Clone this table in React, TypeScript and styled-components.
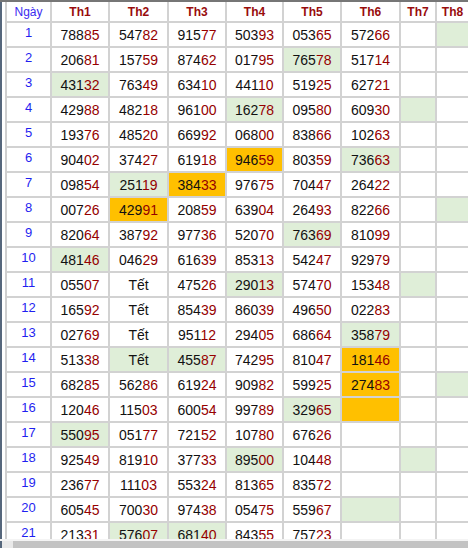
import React from "react";
import styled, { createGlobalStyle } from "styled-components";

const Global = createGlobalStyle`
  html, body { margin: 0; padding: 0; background: #fff; overflow: hidden; }
  body { font-family: "Liberation Sans", Arial, sans-serif; }
`;

type Bg = "g" | "o" | undefined;
type Cell = { v: string; bg?: Bg };

const raw: string[][] = [
  ["78885", "54782", "91577", "50393", "05365", "57266", "", "|g"],
  ["20681", "15759", "87462", "01795", "76578|g", "51714", "", ""],
  ["43132|g", "76349", "63410", "44110", "51925", "62721", "", ""],
  ["42988", "48218", "96100", "16278|g", "09580", "60930", "|g", ""],
  ["19376", "48520", "66992", "06800", "83866", "10263", "", ""],
  ["90402", "37427", "61918", "94659|o", "80359", "73663|g", "", ""],
  ["09854", "25119|g", "38433|o", "97675", "70447", "26422", "", ""],
  ["00726", "42991|o", "20859", "63904", "26493", "82266", "", "|g"],
  ["82064", "38792", "97736", "52070", "76369|g", "81099", "", ""],
  ["48146|g", "04629", "61639", "85313", "54247", "92979", "", ""],
  ["05507", "Tết", "47526", "29013|g", "57470", "15348", "|g", ""],
  ["16592", "Tết", "85439", "86039", "49650", "02283", "", ""],
  ["02769", "Tết", "95112", "29405", "68664", "35879|g", "", ""],
  ["51338", "Tết|g", "45587|g", "74295", "81047", "18146|o", "", ""],
  ["68285", "56286", "61924", "90982", "59925", "27483|o", "", "|g"],
  ["12046", "11503", "60054", "99789", "32965|g", "|o", "", ""],
  ["55095|g", "05177", "72152", "10780", "67626", "", "", ""],
  ["92549", "81910", "37733", "89500|g", "10448", "", "|g", ""],
  ["23677", "11103", "55324", "81365", "83572", "", "", ""],
  ["60545", "70030", "97438", "05475", "55967", "|g", "", ""],
  ["21331", "57607|g", "68140|g", "84355", "75723", "", "", ""],
];

const rows: Cell[][] = raw.map((r) =>
  r.map((s) => {
    const [v, bg] = s.split("|");
    return { v, bg: (bg as Bg) || undefined };
  })
);

const headers = ["Th1", "Th2", "Th3", "Th4", "Th5", "Th6", "Th7", "Th8"];

const Page = styled.div`
  display: flex;
  height: 548px;
  border-top: 2px solid #767676;
  box-sizing: border-box;
  overflow: hidden;
`;

const Frame = styled.div`
  width: 2px;
  flex: none;
  background: #56677c;
`;

const Gutter = styled.div`
  width: 3px;
  flex: none;
  background: #ffffff;
`;

const Grid = styled.div`
  display: grid;
  grid-template-columns: 45px 58px 59px 58px 57px 58px 59px 36px 33px;
  grid-auto-rows: 25px;
  grid-template-rows: 21px;
  border-left: 2px solid #cfcfcf;
  align-content: start;
`;

const BaseCell = styled.div`
  box-sizing: border-box;
  border-right: 2px solid #d2d2d2;
  border-bottom: 2px solid #d2d2d2;
  display: flex;
  align-items: center;
  justify-content: center;
  white-space: nowrap;
`;

const HeadCell = styled(BaseCell)`
  font-size: 12px;
  font-weight: bold;
  color: #980c0c;
  padding-top: 1px;
`;

const DayHead = styled(BaseCell)`
  font-size: 12px;
  color: #3b2cf0;
  padding-top: 1px;
`;

const DayCell = styled(BaseCell)`
  font-size: 13px;
  color: #1f1ff0;
  padding-bottom: 5px;
`;

const DataCell = styled(BaseCell)<{ $bg?: Bg }>`
  font-size: 14px;
  color: #111;
  background: ${(p) =>
    p.$bg === "g" ? "#dfeed8" : p.$bg === "o" ? "#ffc000" : "#ffffff"};
`;

const Tail = styled.span`
  color: #960000;
`;

const Scrollbar = styled.div`
  position: fixed;
  left: 0;
  right: 0;
  bottom: 0;
  height: 9px;
  display: flex;
  border-top: 2px solid #f4f4f4;
  box-sizing: border-box;
`;

const ScrollCap = styled.div`
  width: 13px;
  flex: none;
  background: #e9e9e9;
  border-left: 2px solid #56677c;
  box-sizing: border-box;
`;

const ScrollTrack = styled.div`
  flex: 1;
  background: #c3c3c3;
`;

function Num({ v }: { v: string }) {
  if (/^\d{5}$/.test(v)) {
    return (
      <span>
        {v.slice(0, 3)}
        <Tail>{v.slice(3)}</Tail>
      </span>
    );
  }
  return <span>{v}</span>;
}

export default function App() {
  return (
    <>
      <Global />
      <Page>
        <Frame />
        <Gutter />
        <Grid>
          <DayHead>Ngày</DayHead>
          {headers.map((h) => (
            <HeadCell key={h}>{h}</HeadCell>
          ))}
          {rows.map((r, i) => (
            <React.Fragment key={i}>
              <DayCell>{i + 1}</DayCell>
              {r.map((c, j) => (
                <DataCell key={j} $bg={c.bg}>
                  <Num v={c.v} />
                </DataCell>
              ))}
            </React.Fragment>
          ))}
        </Grid>
      </Page>
      <Scrollbar>
        <ScrollCap />
        <ScrollTrack />
      </Scrollbar>
    </>
  );
}
